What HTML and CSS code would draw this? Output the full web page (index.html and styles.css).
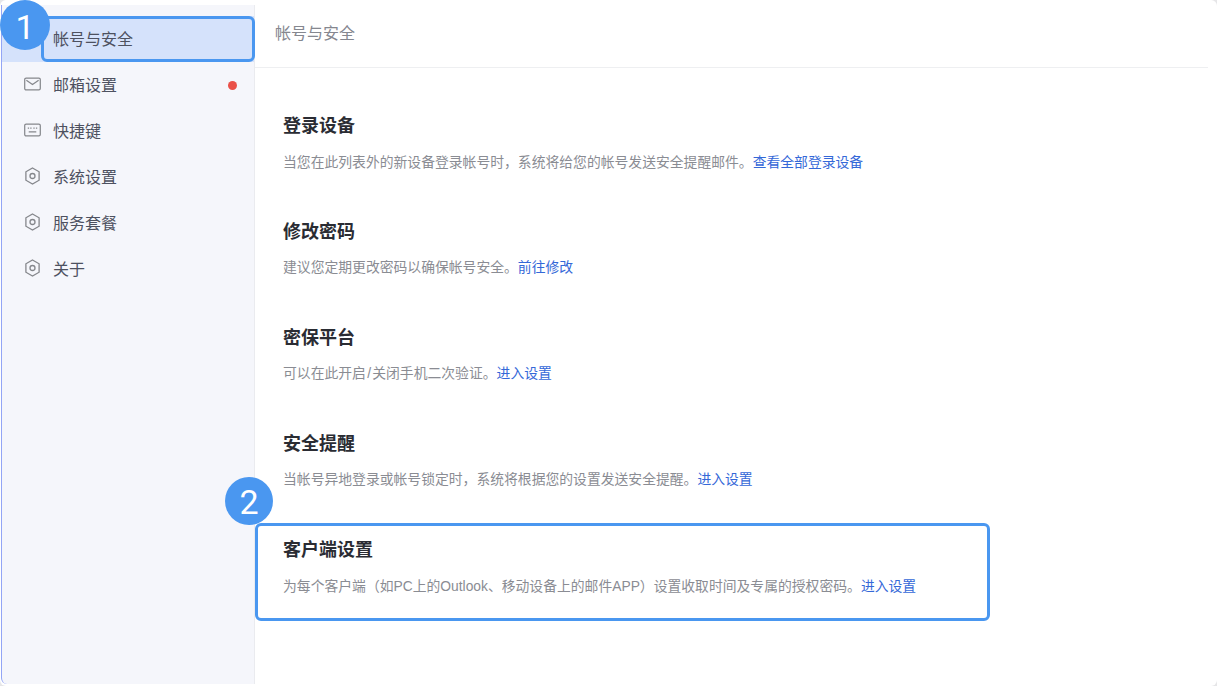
FILE: index.html
```html
<!DOCTYPE html>
<html lang="zh-CN">
<head>
<meta charset="utf-8">
<title>帐号与安全</title>
<link rel="stylesheet" href="styles.css">
</head>
<body>
<div class="window">
  <aside class="sidebar">
    <nav class="nav">
      <a class="nav-item active"><span class="nav-icon"></span><span class="nav-label">帐号与安全</span></a>
      <a class="nav-item">
        <svg class="nav-icon" viewBox="0 0 18 14" width="18" height="14"><rect x="0.75" y="0.75" width="16.5" height="12.5" rx="1.5" fill="none" stroke="#85878c" stroke-width="1.3"/><path d="M2.5 3l6.5 4.5L15.5 3" fill="none" stroke="#85878c" stroke-width="1.3"/></svg>
        <span class="nav-label">邮箱设置</span><span class="dot"></span>
      </a>
      <a class="nav-item">
        <svg class="nav-icon" viewBox="0 0 18 14" width="18" height="14"><rect x="0.75" y="0.75" width="16.5" height="12.5" rx="1.5" fill="none" stroke="#85878c" stroke-width="1.3"/><path d="M4 5h1.4M6.6 5H8M9.9 5h1.4M12.6 5H14M5 9h8" fill="none" stroke="#85878c" stroke-width="1.2"/></svg>
        <span class="nav-label">快捷键</span>
      </a>
      <a class="nav-item">
        <svg class="nav-icon" viewBox="0 0 16 18" width="16" height="18"><path d="M8 1l6.6 3.8v8.4L8 17l-6.6-3.8V4.800z" fill="none" stroke="#85878c" stroke-width="1.3"/><circle cx="8" cy="9" r="2.500" fill="none" stroke="#85878c" stroke-width="1.300"/></svg>
        <span class="nav-label">系统设置</span>
      </a>
      <a class="nav-item">
        <svg class="nav-icon" viewBox="0 0 16 18" width="16" height="18"><path d="M8 1l6.6 3.8v8.4L8 17l-6.6-3.8V4.800z" fill="none" stroke="#85878c" stroke-width="1.3"/><circle cx="8" cy="9" r="2.500" fill="none" stroke="#85878c" stroke-width="1.300"/></svg>
        <span class="nav-label">服务套餐</span>
      </a>
      <a class="nav-item">
        <svg class="nav-icon" viewBox="0 0 16 18" width="16" height="18"><path d="M8 1l6.6 3.8v8.4L8 17l-6.6-3.8V4.800z" fill="none" stroke="#85878c" stroke-width="1.3"/><circle cx="8" cy="9" r="2.500" fill="none" stroke="#85878c" stroke-width="1.300"/></svg>
        <span class="nav-label">关于</span>
      </a>
    </nav>
  </aside>
  <main class="main">
    <header class="main-header">帐号与安全</header>
    <section class="section section-loose">
      <h2 class="section-title">登录设备</h2>
      <p class="section-desc">当您在此列表外的新设备登录帐号时，系统将给您的帐号发送安全提醒邮件。<a class="link">查看全部登录设备</a></p>
    </section>
    <section class="section">
      <h2 class="section-title">修改密码</h2>
      <p class="section-desc">建议您定期更改密码以确保帐号安全。<a class="link">前往修改</a></p>
    </section>
    <section class="section">
      <h2 class="section-title">密保平台</h2>
      <p class="section-desc">可以在此开启<span class="slash">/</span>关闭手机二次验证。<a class="link">进入设置</a></p>
    </section>
    <section class="section">
      <h2 class="section-title">安全提醒</h2>
      <p class="section-desc">当帐号异地登录或帐号锁定时，系统将根据您的设置发送安全提醒。<a class="link">进入设置</a></p>
    </section>
    <section class="section section-loose">
      <h2 class="section-title">客户端设置</h2>
      <p class="section-desc">为每个客户端（如PC上的Outlook、移动设备上的邮件APP）设置收取时间及专属的授权密码。<a class="link">进入设置</a></p>
    </section>
  </main>
  <div class="highlight highlight-nav"></div>
  <div class="highlight highlight-section"></div>
  <div class="badge badge-one">1</div>
  <div class="badge badge-two">2</div>
</div>
</body>
</html>
```
FILE: styles.css
```css
* { box-sizing: border-box; }
html, body { margin: 0; height: 100%; background: #e6e6e8; overflow: hidden; }
body { font-family: "Liberation Sans", "Noto Sans CJK SC", sans-serif; }

.window {
  position: relative;
  display: flex;
  width: 1217px;
  height: 686px;
  padding: 5px 0 2px 1px;
  background: #fff;
  border-radius: 6px;
}

.sidebar {
  width: 254px;
  flex: none;
  background: #f5f6fb;
  border-left: 1.500px solid #93a5f5;
  border-right: 1px solid #eaebef;
  padding-top: 11px;
  border-bottom-left-radius: 6px;
}
.nav { display: flex; flex-direction: column; }
.nav-item {
  display: flex;
  align-items: center;
  height: 46px;
  padding-left: 22px;
  padding-bottom: 2px;
  position: relative;
  font-size: 16px;
  color: #4d5160;
}
.nav-item.active { background: #d5e2fb; }
.nav-icon { flex: none; width: 17px; }
.nav-label { margin-left: 12px; line-height: 24px; padding-top: 4px; }
.dot {
  width: 9px;
  height: 9px;
  border-radius: 50%;
  background: #ea5149;
  margin-left: auto;
  margin-right: 17px;
  margin-top: 2px;
}

.main { flex: 1; padding-right: 9px; min-width: 0; }
.main-header {
  height: 63px;
  padding: 17px 0 0 20px;
  font-size: 16px;
  line-height: 24px;
  color: #85878f;
  border-bottom: 1px solid #eeeff1;
}
.section { padding: 45px 0 0 28px; height: 106px; }
.section-title {
  margin: 0;
  font-size: 18px;
  line-height: 26px;
  font-weight: 700;
  color: #2a2c33;
}
.section-desc {
  margin: 12px 0 0;
  font-size: 13.820px;
  line-height: 20px;
  color: #8a8c93;
  white-space: nowrap;
}
.section-loose .section-desc { margin-top: 13px; }
.slash { padding: 0 1.250px; }
.link { color: #3468d8; }

.highlight {
  position: absolute;
  border: 3px solid #4a97f0;
  border-radius: 6px;
}
.highlight-nav { left: 41px; top: 16px; width: 214px; height: 46px; }
.highlight-section { left: 255px; top: 523px; width: 735px; height: 98px; }

.badge {
  position: absolute;
  display: flex;
  align-items: center;
  justify-content: center;
  border-radius: 50%;
  background: #4a97f0;
  color: #fff;
  font-family: Roboto, "Liberation Sans", sans-serif;
  font-weight: 400;
}
.badge-one { left: 0; top: 0; width: 50px; height: 50px; font-size: 34px; padding-top: 3px; }
.badge-two { left: 225px; top: 477px; width: 48px; height: 48px; font-size: 34px; padding-top: 2px; }
```
